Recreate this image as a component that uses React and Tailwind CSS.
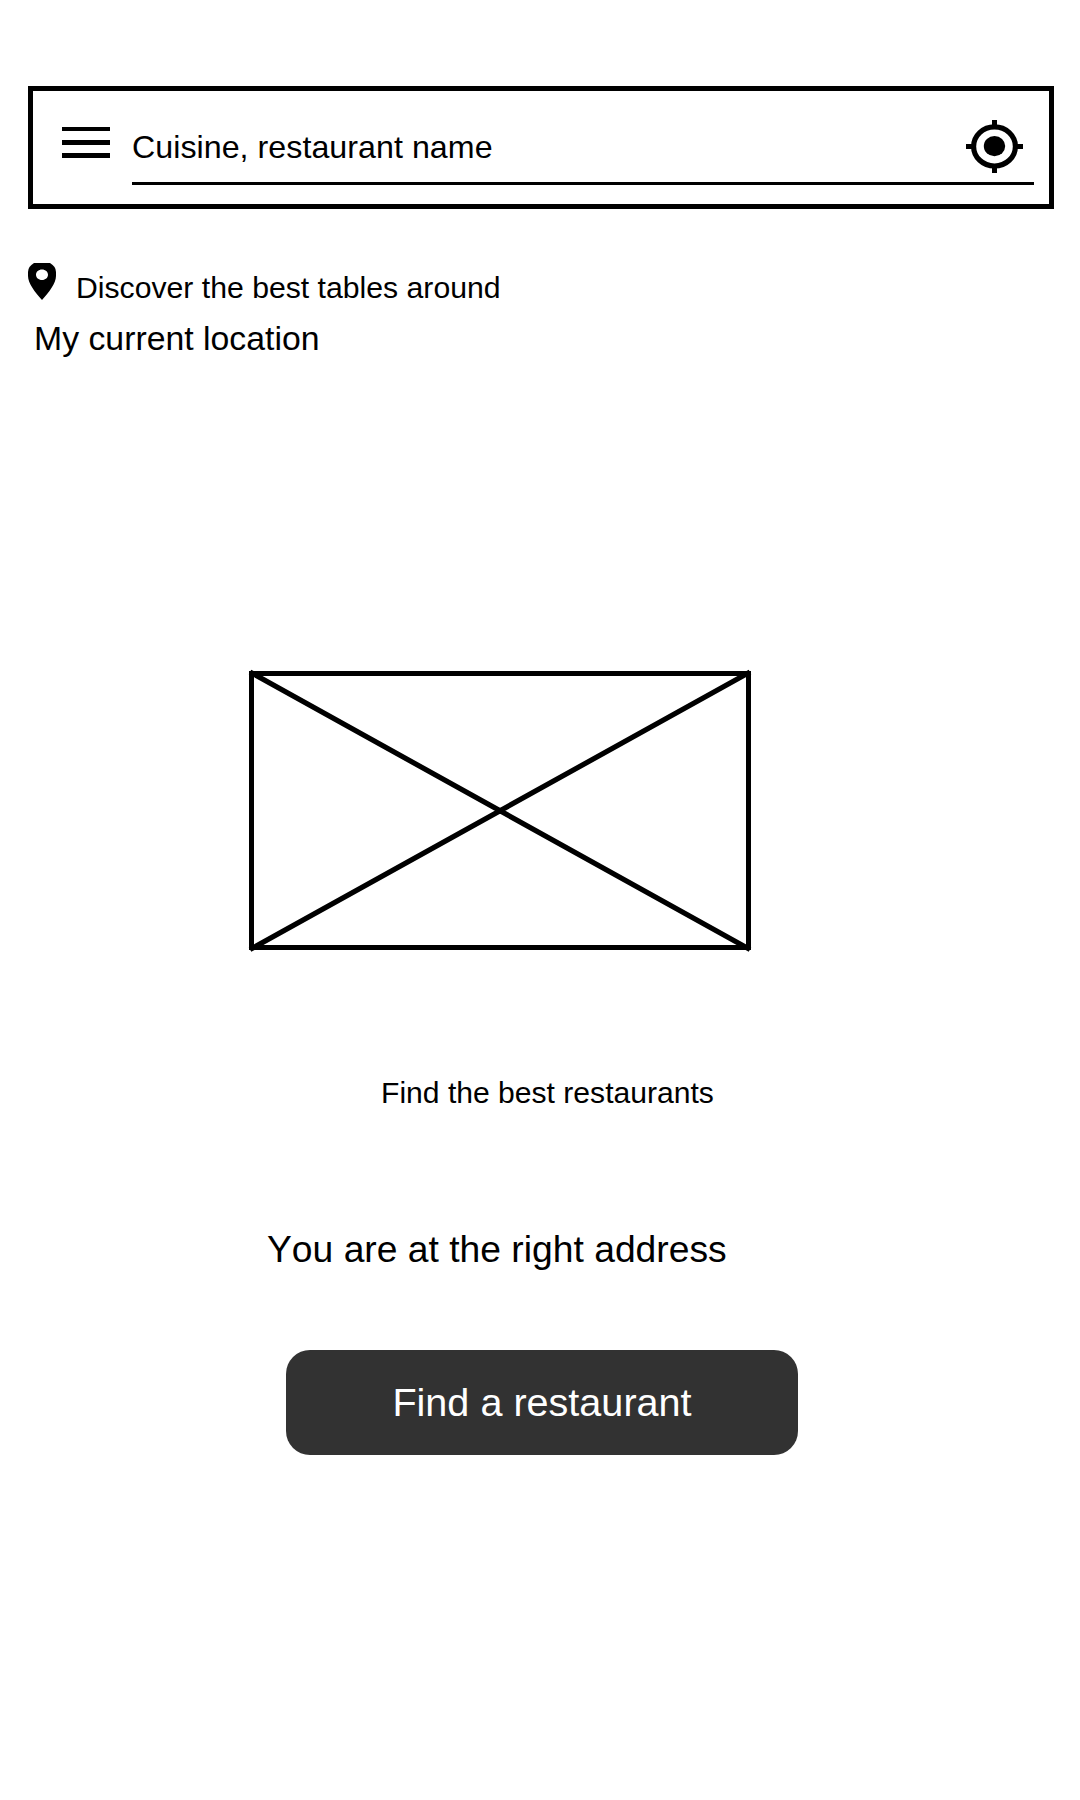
function MenuIcon() {
  return (
    <svg className="mt-9 h-[31px] w-12 shrink-0" viewBox="0 0 48 31" shapeRendering="crispEdges">
      <path d="M0 0h48v4H0zM0 13h48v5H0zM0 26h48v5H0z" />
    </svg>
  );
}

function LocateIcon() {
  return (
    <svg className="mt-[29px] mr-[11px] h-[53px] w-[57px] shrink-0" viewBox="0 0 57 53">
      <ellipse cx="28.5" cy="26.4" rx="20.9" ry="19.6" fill="none" stroke="#000" strokeWidth="5.2" />
      <ellipse cx="28.5" cy="26.1" rx="10.7" ry="10.200" />
      <path d="M26 0h5v7h-5zM26 45h5v8h-5zM0 24h8v5H0zM49 24h8v5h-8z" />
    </svg>
  );
}

function PinIcon() {
  return (
    <svg className="h-[37px] w-7 shrink-0" viewBox="0 0 28 37">
      <path
        fillRule="evenodd"
        d="M6 0H22Q28 3.500 28 9V13C28 20 21 29.500 14 37C7 29.500 0 20 0 13V9Q0 3.500 6 0ZM14 6.500C10.500 6.500 8 8.900 8 11.700S10.500 17 14 17S20 14.500 20 11.700S17.500 6.500 14 6.500Z"
      />
    </svg>
  );
}

function ImagePlaceholder() {
  return (
    <svg
      className="mt-[312px] ml-[249px] h-[282px] w-[504px] overflow-visible"
      viewBox="0 0 504 282"
      fill="none"
      stroke="#000"
    >
      <rect x="2.500" y="3.500" width="497" height="274" strokeWidth="5" />
      <path d="M1 2L501 279.500M501 2L1 279.500" strokeWidth="5.2" />
    </svg>
  );
}

export default function App() {
  return (
    <main className="flex h-[1800px] w-[1080px] flex-col overflow-hidden bg-white pt-[86px] font-['Liberation_Sans',Arial,sans-serif] whitespace-nowrap text-black [font-kerning:none]">
      <header className="mx-7 mr-[26px] flex h-[123px] border-5 border-black pr-[15px] pl-[29px]">
        <MenuIcon />
        <div className="ml-[22px] flex h-[94px] flex-1 items-start border-b-3 border-black">
          <span className="mt-9 flex-1 text-[32.2px] leading-10 tracking-[0.04px]">Cuisine, restaurant name</span>
          <LocateIcon />
        </div>
      </header>

      <section className="mt-[54px]">
        <div className="ml-7 flex h-[37px]">
          <PinIcon />
          <p className="mt-[5px] ml-5 text-[30.2px] leading-10">Discover the best tables around</p>
        </div>
        <p className="mt-[18px] ml-[34px] text-[33.8px] leading-10">My current location</p>
      </section>

      <ImagePlaceholder />

      <p className="mt-[121px] ml-[381px] text-[30.1px] leading-10">Find the best restaurants</p>
      <h1 className="mt-[116px] ml-[267px] text-[37.25px] leading-10">You are at the right address</h1>
      <button className="mt-[81px] ml-[286px] h-[105px] w-[512px] shrink-0 rounded-3xl bg-[#323232] pb-[2px] text-[39.6px] leading-10 text-white">
        Find a restaurant
      </button>
    </main>
  );
}
